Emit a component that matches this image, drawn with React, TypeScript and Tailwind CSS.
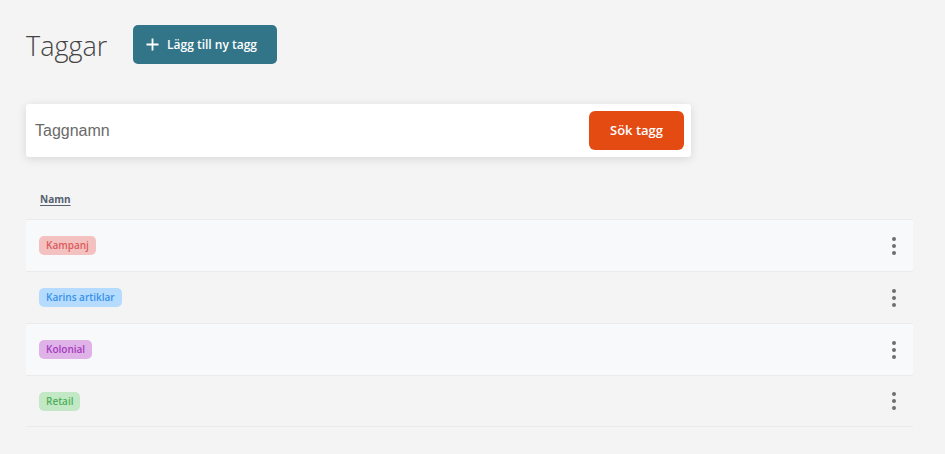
import React from "react";

const tags = [
  { name: "Kampanj", bg: "bg-[#f4c1c1]", fg: "text-[#dc5a5a]" },
  { name: "Karins artiklar", bg: "bg-[#b5dcff]", fg: "text-[#3591ea]" },
  { name: "Kolonial", bg: "bg-[#dfb2e8]", fg: "text-[#a53cbd]" },
  { name: "Retail", bg: "bg-[#c3e8c6]", fg: "text-[#4db058]" },
];

function Dots() {
  return (
    <div className="flex flex-col items-center gap-[3px] w-4">
      <span className="block w-[4px] h-[4px] rounded-full bg-[#6e6e6e]" />
      <span className="block w-[4px] h-[4px] rounded-full bg-[#6e6e6e]" />
      <span className="block w-[4px] h-[4px] rounded-full bg-[#6e6e6e]" />
    </div>
  );
}

export default function App() {
  return (
    <div
      className="w-[945px] h-[454px] bg-[#f4f4f4] overflow-hidden pl-[26px] pr-[32px] pt-[25px]"
      style={{ fontFamily: '"Open Sans", sans-serif' }}
    >
      <div className="flex items-center h-[39px]">
        <h1 className="text-[27px] font-light text-[#444] leading-none w-[107px] mt-[1px]">Taggar</h1>
        <button className="h-[39px] w-[144px] rounded-[5px] bg-[#327589] text-white flex items-center pl-[13px] gap-[8px] text-[12px] font-semibold">
          <svg width="13" height="13" viewBox="0 0 13 13" className="shrink-0">
            <path d="M6.5 0.5v12M0.5 6.5h12" stroke="white" strokeWidth="1.8" />
          </svg>
          <span>Lägg till ny tagg</span>
        </button>
      </div>

      <div className="mt-[40px] w-[665px] h-[53px] bg-white rounded-[3px] shadow-[0_2px_10px_rgba(0,0,0,0.12)] flex items-center pl-[9px] pr-[7px]">
        <span
          className="flex-1 text-[16px] text-[#6a6a6a]"
          style={{ fontFamily: '"Liberation Sans", Arial, sans-serif' }}
        >
          Taggnamn
        </span>
        <button className="w-[95px] h-[39px] rounded-[6px] bg-[#e44b13] text-white text-[13px] font-semibold">
          Sök tagg
        </button>
      </div>

      <div className="mt-[23px] w-[887px]">
        <div className="h-[39px] flex items-center pl-[14px]">
          <span className="text-[10px] font-bold text-[#556070] underline underline-offset-2">Namn</span>
        </div>
        {tags.map((t, i) => (
          <div
            key={t.name}
            className={`h-[52px] flex items-center justify-between pl-[13px] pr-[11px] border-t border-[#ebebeb] ${
              i % 2 === 0 ? "bg-[#f8f9fa]" : "bg-[#f4f4f4]"
            } ${i === tags.length - 1 ? "border-b" : ""}`}
          >
            <span className={`inline-flex items-center h-[19px] px-[7px] rounded-[5px] text-[10px] font-semibold ${t.bg} ${t.fg}`}>
              {t.name}
            </span>
            <Dots />
          </div>
        ))}
      </div>
    </div>
  );
}
